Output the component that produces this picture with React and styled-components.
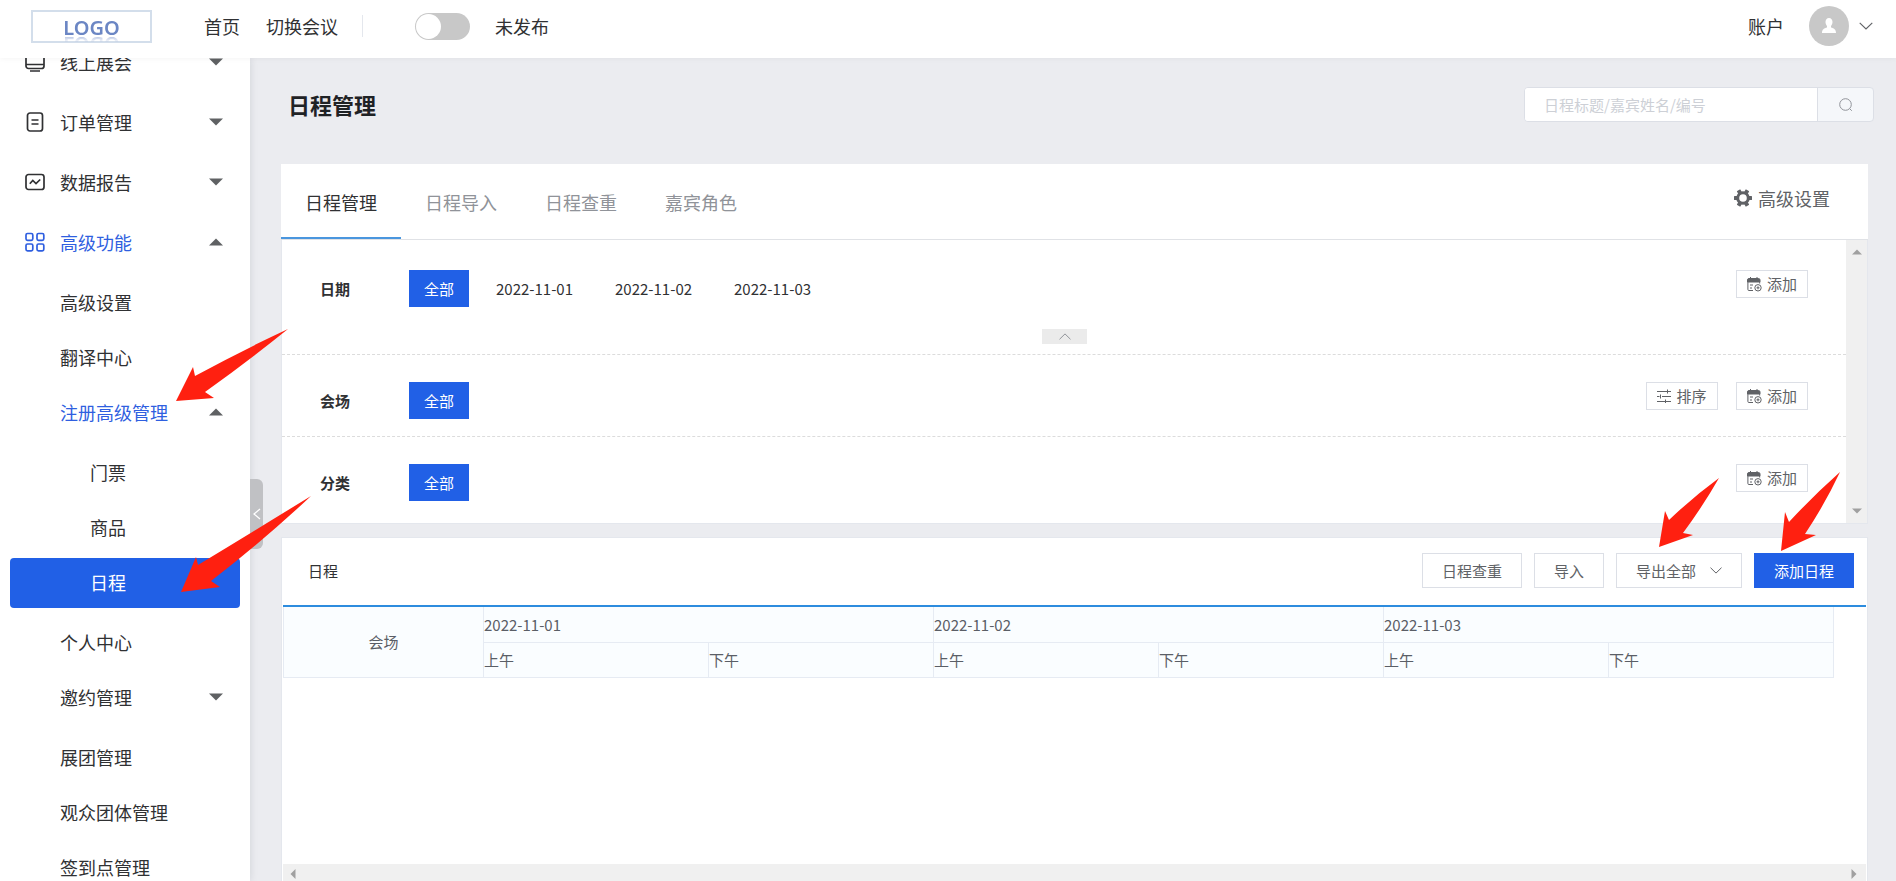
import React from 'react';
import styled, { createGlobalStyle } from 'styled-components';

const menu = [
  { label: '线上展会', level: 1, icon: 'monitor', parent: true },
  { label: '订单管理', level: 1, icon: 'order', parent: true },
  { label: '数据报告', level: 1, icon: 'report', parent: true },
  { label: '高级功能', level: 1, icon: 'grid', parent: true, open: true },
  { label: '高级设置', level: 2 },
  { label: '翻译中心', level: 2 },
  { label: '注册高级管理', level: 2, parent: true, open: true },
  { label: '门票', level: 3 },
  { label: '商品', level: 3 },
  { label: '日程', level: 3, active: true, last: true },
  { label: '个人中心', level: 2 },
  { label: '邀约管理', level: 2, parent: true },
  { label: '展团管理', level: 2 },
  { label: '观众团体管理', level: 2 },
  { label: '签到点管理', level: 2 },
];

const tabs = ['日程管理', '日程导入', '日程查重', '嘉宾角色'];
const dates = ['2022-11-01', '2022-11-02', '2022-11-03'];

const Caret = ({ size = 14, color = '#5f6163', dir = 'down' }) => {
  const angle = { down: 0, left: 90, up: 180, right: 270 }[dir];
  return (
    <svg width={size} height={size} viewBox="0 0 14 14" aria-hidden="true">
      <path d="M0 3.5h14L7 10.5z" fill={color} transform={`rotate(${angle} 7 7)`} />
    </svg>
  );
};

const Chevron = ({ width = 12, height = 7, color = '#606266', up }) => (
  <svg width={width} height={height} viewBox="0 0 12 7" fill="none" aria-hidden="true">
    <path d={up ? 'M.5 6.3L6 .9l5.5 5.4' : 'M.5.7L6 6.1 11.5.7'} stroke={color} />
  </svg>
);

const MenuIcon = ({ name }) => (
  <svg width="20" height="20" viewBox="0 0 20 20" fill="none" stroke="currentColor" strokeWidth="1.7" aria-hidden="true">
    {name === 'monitor' && (
      <>
        <rect x="1" y="1" width="18" height="15.5" rx="2.5" />
        <path d="M1 12.5h18M5 19h10" />
      </>
    )}
    {name === 'order' && (
      <>
        <rect x="2.5" y="1" width="15" height="18" rx="2.5" />
        <path d="M6.5 8h7M6.5 12h7" />
      </>
    )}
    {name === 'report' && (
      <>
        <rect x="1" y="2.5" width="18" height="15" rx="2.5" />
        <path d="M4.8 11.8l3-3.3 3.2 3 4.2-4" />
      </>
    )}
    {name === 'grid' && (
      <>
        <rect x="1" y="1.5" width="6.8" height="6.8" rx="1.5" />
        <rect x="12" y="1.5" width="6.8" height="6.8" rx="1.5" />
        <rect x="1" y="12" width="6.8" height="6.8" rx="1.5" />
        <rect x="12" y="12" width="6.8" height="6.8" rx="1.5" />
      </>
    )}
  </svg>
);

const GearIcon = () => (
  <svg width="18" height="18" viewBox="0 0 18 18" aria-hidden="true">
    <circle cx="9" cy="9" r="5.3" fill="none" stroke="#606266" strokeWidth="3" />
    <g fill="#606266">
      {[30, 90, 150, 210, 270, 330].map((a) => (
        <rect key={a} x="7" y="0" width="4" height="4" rx=".5" transform={`rotate(${a} 9 9)`} />
      ))}
    </g>
  </svg>
);

const CalendarAddIcon = () => (
  <svg width="15" height="15" viewBox="0 0 15 15" fill="none" stroke="#606266" aria-hidden="true">
    <path d="M.5 5V3q0-1.500 1.500-1.500h9.500Q13 1.500 13 3v2z" fill="#606266" />
    <path d="M3.500 0v2M10 0v2M.9 5v7.500q0 1 1 1H6M12.700 5v1.500M3 8h3M3 11h2" />
    <circle cx="11" cy="10.800" r="3.200" />
    <path d="M9.500 10.800h3M11 9.300v3" />
  </svg>
);

const SortIcon = () => (
  <svg width="14" height="14" viewBox="0 0 14 14" fill="none" stroke="#606266" aria-hidden="true">
    <path d="M0 2.500h14M0 7.500h2.500M5 7.500h9M0 12.500h14M10.500.5v4M3.500 5.500v4M8.500 10.500v3.500" />
  </svg>
);

const App = () => {
  return (
    <Page>
      <GlobalStyle />
      <TopBar>
        <Logo href="#">
          <span>LOGO</span>
        </Logo>
        <TopNav>
          <a href="#">首页</a>
          <a href="#">切换会议</a>
        </TopNav>
        <PublishSwitch>
          <input type="checkbox" />
          <span>未发布</span>
        </PublishSwitch>
        <Account>
          <span>账户</span>
          <Avatar>
            <svg width="16" height="18" viewBox="0 0 16 18" fill="#fff" aria-hidden="true">
              <path d="M8 1c2.200 0 3.500 1.700 3.500 4 0 1.800-.8 3.200-1.500 4v1.500c2.800.8 5 1.800 5 5.500H1c0-3.700 2.200-4.700 5-5.500V9c-.7-.8-1.500-2.200-1.500-4C4.500 2.700 5.800 1 8 1z" />
            </svg>
          </Avatar>
          <Chevron width={14} height={8} />
        </Account>
      </TopBar>

      <Body>
        <Sidebar>
          <MenuList>
            {menu.map((item) => (
              <MenuItem key={item.label} $spaced={item.parent || item.last}>
                <MenuLink href="#" $level={item.level} $open={item.open} $active={item.active}>
                  {item.icon && <MenuIcon name={item.icon} />}
                  <span>{item.label}</span>
                  {item.parent && <Caret dir={item.open ? 'up' : 'down'} />}
                </MenuLink>
              </MenuItem>
            ))}
          </MenuList>
        </Sidebar>
        <SidebarHandle aria-label="收起菜单">
          <svg width="8" height="12" viewBox="0 0 8 12" fill="none" stroke="#fff" strokeWidth="1.3" aria-hidden="true">
            <path d="M7 1L1 6l6 5" />
          </svg>
        </SidebarHandle>

        <Main>
          <PageHead>
            <h1>日程管理</h1>
            <Search>
              <input type="text" aria-label="搜索" placeholder="日程标题/嘉宾姓名/编号" />
              <button type="button" aria-label="查询">
                <svg width="14" height="14" viewBox="0 0 14 14" fill="none" stroke="#909399" aria-hidden="true">
                  <circle cx="6.500" cy="6.500" r="5.800" />
                  <path d="M10.800 10.800l2 2" />
                </svg>
              </button>
            </Search>
          </PageHead>

          <Tabs>
            {tabs.map((tab, i) => (
              <Tab key={tab} type="button" $active={i === 0}>
                {tab}
              </Tab>
            ))}
            <Advanced type="button">
              <GearIcon />
              高级设置
            </Advanced>
          </Tabs>

          <FilterPanel>
            <Filters>
              <FilterRow $tall>
                <FilterLabel>日期</FilterLabel>
                <AllButton type="button">全部</AllButton>
                <DateList>
                  {dates.map((d) => (
                    <button key={d} type="button">{d}</button>
                  ))}
                </DateList>
                <SmallButton type="button"><CalendarAddIcon />添加</SmallButton>
                <Collapse type="button" aria-label="收起">
                  <Chevron up color="#909399" />
                </Collapse>
              </FilterRow>
              <FilterRow>
                <FilterLabel>会场</FilterLabel>
                <AllButton type="button">全部</AllButton>
                <DateList />
                <SmallButton type="button"><SortIcon />排序</SmallButton>
                <SmallButton type="button"><CalendarAddIcon />添加</SmallButton>
              </FilterRow>
              <FilterRow>
                <FilterLabel>分类</FilterLabel>
                <AllButton type="button">全部</AllButton>
                <DateList />
                <SmallButton type="button"><CalendarAddIcon />添加</SmallButton>
              </FilterRow>
            </Filters>
            <VerticalBar>
              <Caret size={10} color="#a0a0a0" dir="up" />
              <Caret size={10} color="#a0a0a0" />
            </VerticalBar>
          </FilterPanel>

          <SchedulePanel>
            <ScheduleHead>
              <h2>日程</h2>
              <ActionButton type="button">日程查重</ActionButton>
              <ActionButton type="button">导入</ActionButton>
              <ActionButton type="button">导出全部<Chevron /></ActionButton>
              <ActionButton type="button" $primary>添加日程</ActionButton>
            </ScheduleHead>
            <TableWrap>
              <Table>
                <colgroup>
                  <col className="hall" />
                  {dates.map((d) => (
                    <React.Fragment key={d}>
                      <col />
                      <col />
                    </React.Fragment>
                  ))}
                </colgroup>
                <thead>
                  <tr>
                    <th rowSpan="2" className="hall">会场</th>
                    {dates.map((d) => (
                      <th key={d} colSpan="2">{d}</th>
                    ))}
                  </tr>
                  <tr>
                    {dates.map((d) => (
                      <React.Fragment key={d}>
                        <th>上午</th>
                        <th>下午</th>
                      </React.Fragment>
                    ))}
                  </tr>
                </thead>
              </Table>
            </TableWrap>
            <HorizontalBar>
              <Caret size={10} color="#a0a0a0" dir="left" />
              <Caret size={10} color="#a0a0a0" dir="right" />
            </HorizontalBar>
          </SchedulePanel>
        </Main>
      </Body>

      <Pointer $top={328} $left={175} width="114" height="74" viewBox="0 0 114 74" aria-hidden="true">
        <path d="M113 1Q66 23 20 48L18 39 1 73l38-3-9-6Q72 34 113 1z" />
      </Pointer>
      <Pointer $top={495} $left={180} width="132" height="98" viewBox="0 0 132 98" aria-hidden="true">
        <path d="M131 1Q74 36 18 70L16 62 1 97l39-5-9-6Q84 45 131 1z" />
      </Pointer>
      <Pointer $top={477} $right={176} width="62" height="71" viewBox="0 0 62 71" aria-hidden="true">
        <path d="M61 1Q35 20 11 43L7 34 1 70l34-12-10-2Q45 29 61 1z" />
      </Pointer>
      <Pointer $top={471} $right={55} width="61" height="81" viewBox="0 0 61 81" aria-hidden="true">
        <path d="M60 1Q33 25 9 51L5 41 1 80l35-16-11-1Q45 33 60 1z" />
      </Pointer>
    </Page>
  );
};

const GlobalStyle = createGlobalStyle`
  * {
    box-sizing: border-box;
  }
  body {
    margin: 0;
    font-family: 'Noto Sans CJK SC', sans-serif;
    font-size: 15px;
    font-weight: 400;
    color: #303133;
  }
  button,
  input {
    font: inherit;
    color: inherit;
  }
  button {
    padding: 0;
    border: none;
    background: transparent;
    cursor: pointer;
  }
  a {
    color: inherit;
    text-decoration: none;
  }
  svg {
    flex: none;
    display: block;
  }
`;

const Page = styled.div`
  position: relative;
  display: flex;
  flex-direction: column;
  height: 100vh;
  overflow: hidden;
  background: #ebecf0;
`;

const TopBar = styled.header`
  position: relative;
  z-index: 2;
  flex: none;
  display: flex;
  align-items: center;
  height: 58px;
  padding: 0 23px 6px 31px;
  background: #fff;
  box-shadow: 0 0 6px rgba(0, 0, 0, 0.06);
  font-size: 18px;
  line-height: 26px;
`;

const Logo = styled.a`
  width: 121px;
  height: 33px;
  padding-top: 8px;
  border: 2px solid #d3deeb;
  color: #6b86c4;
  font-family: 'Liberation Sans Narrow', 'Noto Sans', sans-serif;
  font-size: 20px;
  font-weight: 600;
  line-height: 16px;
  text-align: center;
  span {
    display: inline-block;
    -webkit-box-reflect: below 0 linear-gradient(transparent 60%, rgba(0, 0, 0, 0.5));
  }
`;

const TopNav = styled.nav`
  display: flex;
  gap: 26px;
  margin-left: 52px;
  padding-right: 24px;
  border-right: 1px solid #e4e7ed;
  line-height: 22px;
`;

const PublishSwitch = styled.label`
  display: flex;
  align-items: center;
  gap: 25px;
  margin-left: 52px;
  input {
    appearance: none;
    display: flex;
    width: 55px;
    height: 27px;
    margin: 0;
    padding: 1px;
    border-radius: 14px;
    background: #c8c8c8;
  }
  input::before {
    content: '';
    width: 25px;
    height: 25px;
    border-radius: 50%;
    background: #fff;
  }
`;

const Account = styled.div`
  display: flex;
  align-items: center;
  gap: 10px;
  margin-left: auto;
`;

const Avatar = styled.div`
  display: flex;
  align-items: center;
  justify-content: center;
  width: 40px;
  height: 40px;
  margin-left: 15px;
  border-radius: 50%;
  background: #c8c8c8;
`;

const Body = styled.div`
  flex: 1;
  display: flex;
  min-height: 0;
`;

const Sidebar = styled.nav`
  flex: none;
  width: 250px;
  overflow: hidden;
  background: #fff;
  box-shadow: 0 0 8px rgba(0, 21, 41, 0.12);
`;

/* the list is scrolled a little, its first entry is half under the top bar */
const MenuList = styled.ul`
  margin: -23px 0 0;
  padding: 0;
  list-style: none;
`;

const MenuItem = styled.li`
  display: flex;
  align-items: center;
  height: 55px;
  padding: 0 10px;
  margin-bottom: ${(p) => (p.$spaced ? '5px' : '0')};
`;

const MenuLink = styled.a`
  flex: 1;
  display: flex;
  align-items: center;
  gap: 15px;
  height: 50px;
  padding-right: 17px;
  padding-bottom: 2px;
  padding-left: ${(p) => ({ 1: '15px', 2: '50px', 3: '80px' }[p.$level])};
  border-radius: 4px;
  background: ${(p) => (p.$active ? '#2160e6' : 'transparent')};
  color: ${(p) => (p.$active ? '#fff' : p.$open ? '#2f5fe0' : '#303133')};
  font-size: 18px;
  span {
    flex: 1;
  }
`;

const SidebarHandle = styled.button`
  flex: none;
  align-self: flex-start;
  display: flex;
  align-items: center;
  justify-content: center;
  width: 13px;
  height: 70px;
  margin-top: 421px;
  border-radius: 0 6px 6px 0;
  background: #c0c1c4;
`;

const Main = styled.main`
  flex: 1;
  display: flex;
  flex-direction: column;
  min-width: 0;
  padding: 0 28px 0 18px;
`;

const PageHead = styled.div`
  flex: none;
  display: flex;
  align-items: flex-start;
  justify-content: space-between;
  height: 106px;
  padding: 29px 0 0 7px;
  margin-right: -6px;
  h1 {
    margin: 0;
    font-size: 22px;
    font-weight: 700;
    line-height: 34px;
    color: #1f2225;
  }
`;

const Search = styled.div`
  display: flex;
  width: 350px;
  height: 35px;
  border: 1px solid #dcdfe6;
  border-radius: 4px;
  background: #f5f7fa;
  overflow: hidden;
  input {
    flex: 1;
    min-width: 0;
    padding: 0 19px;
    border: none;
    outline: none;
    background: #fff;
  }
  input::placeholder {
    color: #cdd0d6;
  }
  button {
    display: flex;
    align-items: center;
    justify-content: center;
    width: 56px;
    border-left: 1px solid #dcdfe6;
  }
`;

const Tabs = styled.div`
  flex: none;
  display: flex;
  height: 76px;
  border-bottom: 1px solid #e0e2e6;
  background: #fff;
`;

const Tab = styled.button`
  padding: 0 24px;
  border-top: 2px solid transparent;
  border-bottom: 2px solid ${(p) => (p.$active ? '#4a96de' : 'transparent')};
  color: ${(p) => (p.$active ? '#303133' : '#909399')};
  font-size: 18px;
`;

const Advanced = styled.button`
  display: flex;
  align-items: center;
  gap: 6px;
  margin: 0 38px 8px auto;
  color: #606266;
  font-size: 18px;
`;

const FilterPanel = styled.section`
  flex: none;
  display: flex;
  border: 1px solid #e4e7ed;
  border-top: none;
  background: #fff;
`;

const Filters = styled.div`
  flex: 1;
`;

const FilterRow = styled.div`
  position: relative;
  display: flex;
  align-items: flex-start;
  height: ${(p) => (p.$tall ? '115px' : '82px')};
  padding: ${(p) => (p.$tall ? '30px' : '27px')} 38px 0;
  border-bottom: 1px dashed #dcdcdc;
  &:last-child {
    height: 86px;
    border-bottom: none;
  }
`;

const FilterLabel = styled.strong`
  width: 89px;
  font-weight: 700;
  line-height: 37px;
`;

const AllButton = styled.button`
  width: 60px;
  height: 37px;
  background: #2160e6;
  color: #fff;
`;

const DateList = styled.div`
  flex: 1;
  display: flex;
  padding-left: 6px;
  button {
    height: 37px;
    padding: 0 21px;
  }
`;

const SmallButton = styled.button`
  display: flex;
  align-items: center;
  justify-content: center;
  gap: 5px;
  width: 72px;
  height: 28px;
  border: 1px solid #dcdfe6;
  color: #606266;
  line-height: 20px;
  & + & {
    margin-left: 18px;
  }
`;

const Collapse = styled.button`
  position: absolute;
  bottom: 10px;
  left: 50%;
  display: flex;
  align-items: center;
  justify-content: center;
  width: 45px;
  height: 15px;
  margin-left: -22px;
  background: #ebebeb;
`;

const VerticalBar = styled.div`
  display: flex;
  flex-direction: column;
  align-items: center;
  justify-content: space-between;
  width: 21px;
  padding: 7px 0;
  background: #f0f0f0;
`;

const SchedulePanel = styled.section`
  flex: 1;
  display: flex;
  flex-direction: column;
  margin-top: 13px;
  padding: 0 1px;
  border: 1px solid #e4e7ed;
  border-bottom: none;
  background: #fff;
`;

const ScheduleHead = styled.div`
  display: flex;
  align-items: center;
  gap: 12px;
  height: 69px;
  padding: 0 12px 2px 25px;
  border-bottom: 2px solid #2d8cde;
  h2 {
    flex: 1;
    margin: 0;
    font-size: 15px;
    font-weight: 400;
  }
`;

const ActionButton = styled.button`
  display: flex;
  align-items: center;
  gap: 14px;
  height: 35px;
  padding: 0 19px;
  border: 1px solid ${(p) => (p.$primary ? '#2160e6' : '#dcdfe6')};
  background: ${(p) => (p.$primary ? '#2160e6' : '#fff')};
  color: ${(p) => (p.$primary ? '#fff' : '#606266')};
`;

const TableWrap = styled.div`
  flex: 1;
  padding-right: 32px;
`;

const Table = styled.table`
  width: 100%;
  table-layout: fixed;
  border-collapse: collapse;
  background: #fafdff;
  color: #5a5e66;
  col.hall {
    width: 200px;
  }
  th {
    height: 35px;
    padding: 0;
    border: 1px solid #e6ebf3;
    border-top: none;
    font-weight: inherit;
    text-align: left;
  }
  th.hall {
    text-align: center;
  }
`;

const HorizontalBar = styled.div`
  display: flex;
  justify-content: space-between;
  height: 17px;
  padding: 5px 7px 0 5px;
  background: #f0f0f0;
`;

const Pointer = styled.svg`
  position: absolute;
  z-index: 3;
  top: ${(p) => p.$top}px;
  left: ${(p) => (p.$left ? `${p.$left}px` : 'auto')};
  right: ${(p) => (p.$right ? `${p.$right}px` : 'auto')};
  fill: #ff2010;
  pointer-events: none;
`;

export default App;
